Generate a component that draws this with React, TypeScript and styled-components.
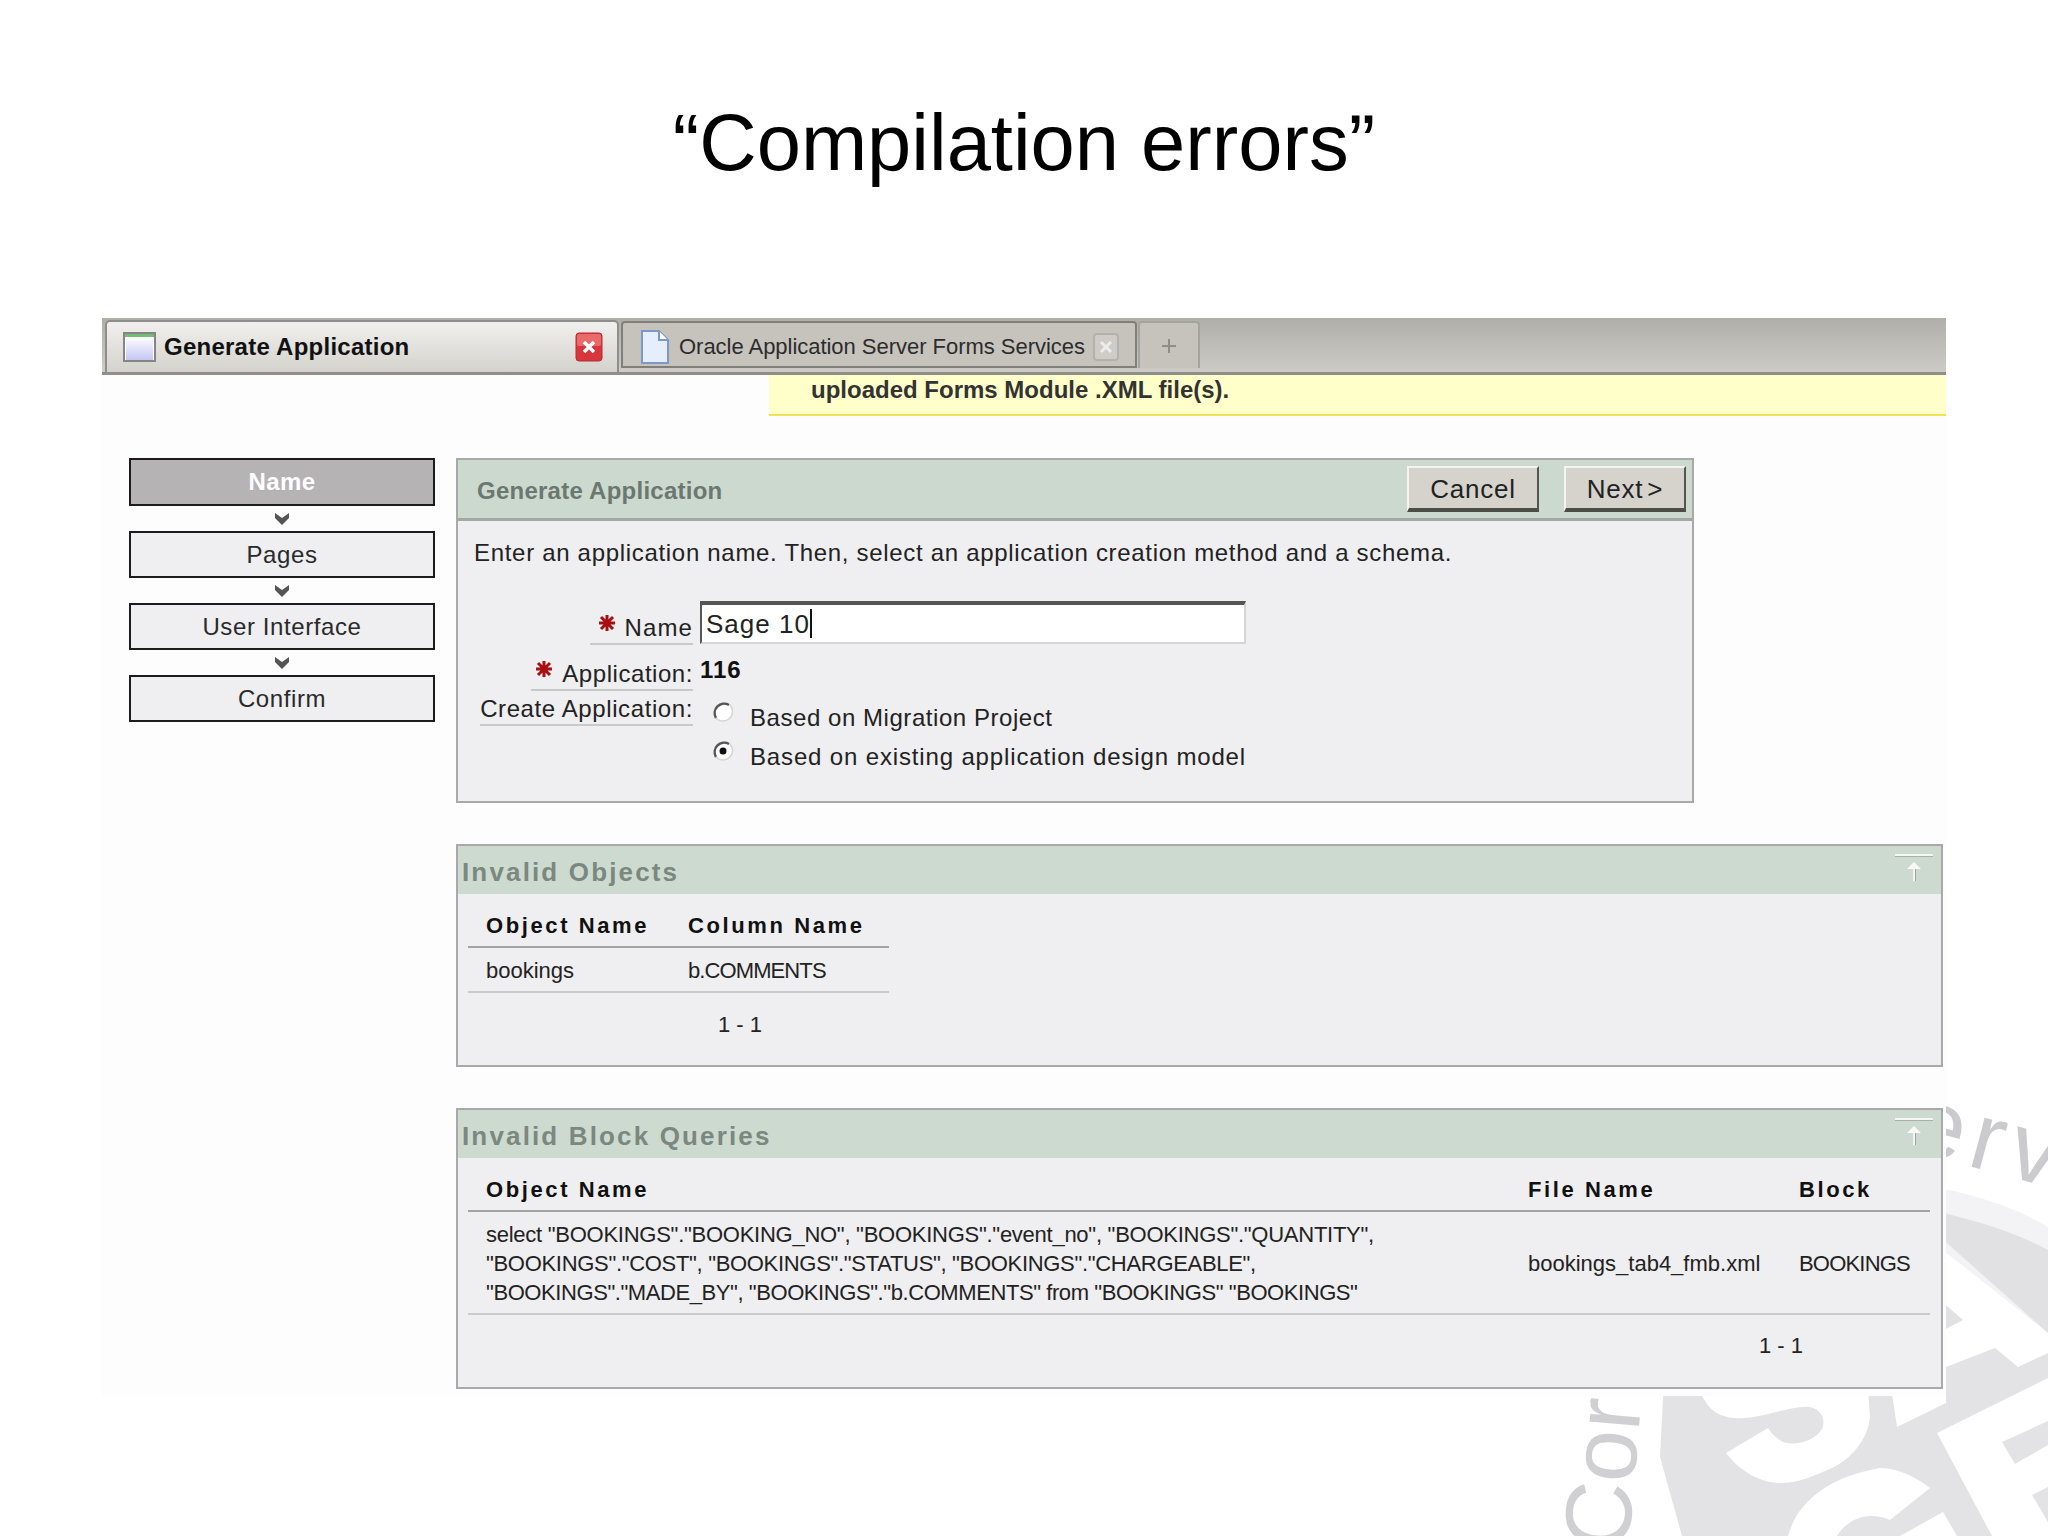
import React from 'react';
import styled, { createGlobalStyle } from 'styled-components';

const GlobalStyle = createGlobalStyle`
  html, body {
    margin: 0;
    background: #fff;
  }
  body {
    font-family: 'Liberation Sans', Arial, sans-serif;
    color: #222;
  }
`;

const Slide = styled.div`
  position: relative;
  width: 2048px;
  height: 1536px;
  overflow: hidden;
  background: #fff;
`;

const Watermark = styled.svg`
  position: absolute;
  left: 0;
  top: 0;
  width: 2048px;
  height: 1536px;
`;

const Title = styled.h1`
  position: relative;
  box-sizing: border-box;
  height: 318px;
  margin: 0;
  padding-top: 97px;
  font-size: 79.5px;
  line-height: 92px;
  font-weight: 400;
  text-align: center;
  color: #000;
`;

const Screenshot = styled.div`
  position: relative;
  width: 1844px;
  height: 1078px;
  margin-left: 102px;
  background: #fdfdfd;
`;

const TabBar = styled.div`
  box-sizing: border-box;
  display: flex;
  align-items: flex-end;
  height: 57px;
  padding-left: 3px;
  background: linear-gradient(#b0aea8, #cdcbc5);
  border-bottom: 3px solid #8e8e8b;
`;

const ActiveTab = styled.div`
  box-sizing: border-box;
  display: flex;
  align-items: center;
  width: 514px;
  height: 55px;
  margin-bottom: -3px;
  padding: 0 14px 0 16px;
  border: 2px solid #8e8e8b;
  border-bottom: 3px solid #8e8e8b;
  border-radius: 5px 5px 0 0;
  background: linear-gradient(#f1f0ee, #d3d2cc);
  font-size: 24px;
  font-weight: 700;
  letter-spacing: 0.25px;
  color: #111;
`;

const InactiveTab = styled.div<{ $plus?: boolean }>`
  box-sizing: border-box;
  display: flex;
  align-items: center;
  justify-content: ${(props) => (props.$plus ? 'center' : 'flex-start')};
  width: ${(props) => (props.$plus ? '62px' : '516px')};
  height: 47px;
  margin-left: ${(props) => (props.$plus ? '1px' : '2px')};
  margin-bottom: 4px;
  padding: ${(props) => (props.$plus ? '0' : '4px 16px 0 18px')};
  border: 2px solid ${(props) => (props.$plus ? '#a5a39e' : '#817f7a')};
  border-bottom-width: ${(props) => (props.$plus ? '0' : '2px')};
  border-radius: 4px 4px 0 0;
  background: #c6c3bd;
  font-size: 22px;
  letter-spacing: -0.03px;
  color: #2c2c2c;
`;

const TabLabel = styled.span`
  flex: 1;
  white-space: nowrap;
`;

const TabIcon = styled.svg<{ $gap: number }>`
  flex: none;
  margin-right: ${(props) => props.$gap}px;
`;

const Banner = styled.div`
  box-sizing: border-box;
  height: 41px;
  margin-left: 667px;
  padding-left: 42px;
  background: #ffffca;
  border-bottom: 2px solid #f4e254;
  font-size: 24px;
  line-height: 30px;
  font-weight: 700;
  color: #333;
`;

const Content = styled.div`
  display: flex;
  gap: 21px;
  padding: 42px 0 0 27px;
`;

const Wizard = styled.div`
  display: flex;
  flex-direction: column;
  align-items: center;
  width: 306px;
  flex: none;
`;

const Step = styled.div<{ $active?: boolean }>`
  box-sizing: border-box;
  width: 100%;
  height: ${(props) => (props.$active ? '48px' : '47px')};
  border: 2px solid #1c1c1c;
  background: ${(props) => (props.$active ? '#b5b3b4' : '#efeef0')};
  color: ${(props) => (props.$active ? '#fff' : '#2a2a2a')};
  font-size: 24px;
  font-weight: ${(props) => (props.$active ? 700 : 400)};
  letter-spacing: ${(props) => (props.$active ? '0.4px' : '0.6px')};
  line-height: 44px;
  text-align: center;
`;

const StepArrow = styled.svg`
  display: block;
  margin: 6px 0;
`;

const Main = styled.div`
  display: flex;
  flex-direction: column;
  width: 1487px;
  flex: none;
`;

const Panel = styled.section<{ $width: number; $height: number; $gap?: number }>`
  box-sizing: border-box;
  width: ${(props) => props.$width}px;
  height: ${(props) => props.$height}px;
  margin-top: ${(props) => props.$gap || 0}px;
  border: 2px solid #a9a9a9;
  background: #efeef0;
`;

const FormHeader = styled.div`
  box-sizing: border-box;
  display: flex;
  align-items: center;
  height: 61px;
  padding: 0 6px 0 19px;
  background: #ccd9cf;
  border-bottom: 3px solid #a2a8a3;
`;

const FormTitle = styled.h2`
  flex: 1;
  margin: 0;
  padding-top: 3px;
  font-size: 24px;
  font-weight: 700;
  letter-spacing: 0.25px;
  color: #6b776f;
`;

const Button = styled.div<{ $width: number }>`
  box-sizing: border-box;
  width: ${(props) => props.$width}px;
  height: 46px;
  margin-left: 25px;
  background: #d6d3cd;
  border: 2px solid #f4f3f0;
  border-right-color: #55554f;
  border-bottom: 4px solid #4d4d48;
  font-size: 26px;
  letter-spacing: 0.8px;
  word-spacing: -4px;
  line-height: 43px;
  text-align: center;
  color: #222;
`;

const Intro = styled.p`
  margin: 18px 0 0 16px;
  font-size: 24px;
  letter-spacing: 0.69px;
  line-height: 28px;
  white-space: nowrap;
`;

const Form = styled.div`
  margin: 34px 0 0 13px;
`;

const FormRow = styled.div<{ $height: number }>`
  display: flex;
  gap: 7px;
  height: ${(props) => props.$height}px;
`;

const LabelCell = styled.div<{ $top?: boolean }>`
  display: flex;
  justify-content: flex-end;
  align-items: ${(props) => (props.$top ? 'flex-start' : 'flex-end')};
  width: 222px;
  flex: none;
  padding-top: ${(props) => (props.$top ? '3px' : '0')};
`;

const FieldLabel = styled.span<{ $spacing: number; $pad?: number }>`
  box-sizing: border-box;
  display: flex;
  align-items: center;
  padding-left: ${(props) => props.$pad || 0}px;
  border-bottom: 2px solid #c9c9c9;
  font-size: 24px;
  letter-spacing: ${(props) => props.$spacing}px;
  line-height: 30px;
  white-space: nowrap;
`;

const RequiredMark = styled.svg`
  flex: none;
  margin: -10px 9px 0 0;
`;

const NameInput = styled.div`
  box-sizing: border-box;
  width: 546px;
  height: 43px;
  padding-left: 4px;
  background: #fff;
  border: 2px solid #d5d5d5;
  border-top: 4px solid #555;
  border-left-color: #555;
  font-size: 26px;
  letter-spacing: 1px;
  line-height: 39px;
`;

const Caret = styled.span`
  display: inline-block;
  width: 2px;
  height: 29px;
  background: #111;
  vertical-align: -5px;
`;

const AppNumber = styled.div`
  margin-top: 11px;
  font-size: 24px;
  font-weight: 700;
  letter-spacing: 1px;
  line-height: 28px;
  color: #111;
`;

const RadioList = styled.div`
  display: flex;
  flex-direction: column;
  gap: 11px;
  margin: 13px 0 0 11px;
`;

const RadioRow = styled.div<{ $spacing: number }>`
  display: flex;
  gap: 15px;
  font-size: 24px;
  letter-spacing: ${(props) => props.$spacing}px;
  line-height: 28px;
  white-space: nowrap;
`;

const RadioIcon = styled.svg`
  flex: none;
  margin-top: -4px;
`;

const SectionHeader = styled.div`
  display: flex;
  align-items: center;
  justify-content: space-between;
  height: 48px;
  padding: 0 7px 0 4px;
  background: #cddacf;
`;

const SectionTitle = styled.h2`
  margin: 0;
  padding-top: 5px;
  font-size: 26px;
  font-weight: 700;
  letter-spacing: 2.15px;
  color: #7b887f;
`;

const ReportTable = styled.table<{ $width: number; $rowHeight: number }>`
  width: ${(props) => props.$width}px;
  margin: 0 0 0 10px;
  border-collapse: collapse;
  table-layout: fixed;

  td {
    height: ${(props) => props.$rowHeight}px;
  }
`;

const HeadCell = styled.th<{ $width: number }>`
  box-sizing: border-box;
  width: ${(props) => props.$width}px;
  height: 53px;
  padding: 11px 0 0 18px;
  border-bottom: 2px solid #a3a3a3;
  font-size: 22px;
  font-weight: 700;
  letter-spacing: 2.6px;
  text-align: left;
  color: #111;
`;

const BodyCell = styled.td<{ $spacing?: number }>`
  padding: 2px 0 0 18px;
  border-bottom: 2px solid #cacaca;
  font-size: 22px;
  letter-spacing: ${(props) => props.$spacing || 0}px;
  line-height: 29px;
  color: #222;
  white-space: nowrap;
`;

const QueryLine = styled.div<{ $spacing: number }>`
  letter-spacing: ${(props) => props.$spacing}px;
`;

const Pagination = styled.div<{ $width: number; $top: number }>`
  width: ${(props) => props.$width}px;
  box-sizing: border-box;
  margin: ${(props) => props.$top}px 0 0 11px;
  padding-right: 128px;
  font-size: 22px;
  line-height: 32px;
  text-align: right;
`;

function BackToTop() {
  return (
    <svg width="40" height="32" viewBox="0 0 40 32">
      <rect x="1" y="0" width="38" height="2" fill="#f4f6f3" />
      <rect x="1" y="2" width="38" height="1" fill="#a9b0a9" />
      <path d="M20 8 L27 15 L13 15 Z" fill="#f8f9f7" />
      <rect x="19" y="15" width="2" height="12" fill="#f4f6f3" />
      <rect x="21" y="15" width="1" height="12" fill="#9da49d" />
    </svg>
  );
}

function StepChevron() {
  return (
    <StepArrow width="14" height="13" viewBox="0 0 14 13">
      <path d="M0 1 L7 6 L14 1 L14 6 L7 13 L0 6 Z" fill="#555" />
    </StepArrow>
  );
}

function Required() {
  return (
    <RequiredMark width="18" height="18" viewBox="0 0 18 18">
      <path d="M9 1 V17 M1 9 H17 M3 3 L15 15 M15 3 L3 15" stroke="#a80f12" strokeWidth="3" />
    </RequiredMark>
  );
}

function Radio({ checked }: { checked?: boolean }) {
  return (
    <RadioIcon width="24" height="24" viewBox="0 0 24 24">
      <circle cx="12" cy="12" r="9" fill="#fff" />
      <path d="M18 5 A9.5 9.5 0 0 0 5 18" fill="none" stroke="#555" strokeWidth="2.5" />
      <path d="M5 18 A9.5 9.5 0 0 0 19 5" fill="none" stroke="#d5d5d5" strokeWidth="1.5" />
      {checked && <circle cx="12" cy="12" r="3.5" fill="#111" />}
    </RadioIcon>
  );
}

const queryLines = [
  { text: 'select "BOOKINGS"."BOOKING_NO", "BOOKINGS"."event_no", "BOOKINGS"."QUANTITY",', spacing: -0.26 },
  { text: '"BOOKINGS"."COST", "BOOKINGS"."STATUS", "BOOKINGS"."CHARGEABLE",', spacing: -0.31 },
  { text: '"BOOKINGS"."MADE_BY", "BOOKINGS"."b.COMMENTS" from "BOOKINGS" "BOOKINGS"', spacing: -0.42 },
];

const App: React.FC = () => {
  return (
    <Slide>
      <GlobalStyle />
      <Watermark viewBox="0 0 2048 1536">
        <path
          d="M1664 1380 L1660 1457 L1682 1536 L1788 1536 C1797 1503 1827 1477 1880 1468 C1900 1468 1920 1480 1930 1488 L1890 1520 C1873 1512 1850 1515 1837 1536 L1900 1536 L1943 1512 L1957 1536 L1992 1536 L1937 1433 L2048 1378 L2048 1353 L2018 1367 L1995 1348 L1946 1367 L1946 1403 L1897 1427 L1890 1380 Z"
          fill="#e3e3e5"
        />
        <path
          d="M1700 1390 C1705 1405 1715 1417 1735 1418 C1760 1420 1790 1405 1810 1407 C1822 1410 1826 1420 1822 1429 C1815 1440 1800 1445 1787 1443 C1778 1441 1772 1434 1768 1428 L1726 1453 C1738 1468 1755 1482 1780 1483 C1800 1483 1815 1475 1830 1469 C1855 1457 1868 1437 1870 1417 L1868 1390 Z"
          fill="#fff"
        />
        <path d="M2048 1227 C2020 1210 1985 1197 1930 1186 L1930 1240 L2048 1333 Z" fill="#f3f3f5" />
        <path d="M2048 1250 C2020 1235 1985 1222 1930 1210 L1930 1228 L2048 1333 Z" fill="#e1e1e3" />
        <path d="M1940 1300 L1963 1320 L1940 1332 Z" fill="#e1e1e3" />
        <path d="M2048 1421 L2002 1442 L2015 1464 L2048 1445 Z" fill="#e3e3e5" />
        <path d="M2048 1487 L2032 1495 L2048 1522 Z" fill="#e3e3e5" />
        <text
          transform="translate(1906 1149) rotate(15)"
          fontFamily="'Liberation Sans', Arial, sans-serif"
          fontSize="96"
          letterSpacing="8"
          fill="#cbcbcd"
        >
          ervi
        </text>
        <text
          transform="translate(1628 1552) rotate(-85)"
          fontFamily="'Liberation Sans', Arial, sans-serif"
          fontSize="94"
          fill="#d0d0d2"
        >
          Cor
        </text>
      </Watermark>

      <Title>“Compilation errors”</Title>

      <Screenshot>
        <TabBar>
          <ActiveTab>
            <TabIcon $gap={8} width="33" height="30" viewBox="0 0 33 30">
              <rect x="1" y="1" width="31" height="28" fill="#fff" stroke="#858585" strokeWidth="2" />
              <rect x="2" y="2" width="29" height="3" fill="#74bd74" />
              <defs>
                <linearGradient id="windowFill" x1="0" y1="0" x2="0" y2="1">
                  <stop offset="0" stopColor="#fbfbff" />
                  <stop offset="1" stopColor="#c6c6f4" />
                </linearGradient>
              </defs>
              <rect x="3" y="6" width="27" height="22" fill="url(#windowFill)" />
            </TabIcon>
            <TabLabel>Generate Application</TabLabel>
            <svg width="28" height="30" viewBox="0 0 28 30">
              <rect x="1" y="1" width="26" height="28" rx="3" fill="#d8363c" stroke="#b92b30" />
              <rect x="2" y="2" width="24" height="12" rx="2" fill="#ea6a6c" />
              <path d="M9 10 L19 20 M19 10 L9 20" stroke="#fff" strokeWidth="3.5" />
            </svg>
          </ActiveTab>
          <InactiveTab>
            <TabIcon $gap={10} width="28" height="34" viewBox="0 0 28 34">
              <path d="M1 1 H18 L27 10 V33 H1 Z" fill="#e4eefc" stroke="#7d97cc" strokeWidth="2" />
              <path d="M18 1 V10 H27" fill="#fff" stroke="#7d97cc" strokeWidth="2" />
            </TabIcon>
            <TabLabel>Oracle Application Server Forms Services</TabLabel>
            <svg width="26" height="28" viewBox="0 0 26 28">
              <rect x="1" y="1" width="24" height="26" rx="3" fill="#cfccc7" stroke="#b3b1ac" strokeWidth="2" />
              <path d="M8 9 L18 19 M18 9 L8 19" stroke="#eeede9" strokeWidth="3" />
            </svg>
          </InactiveTab>
          <InactiveTab $plus>
            <svg width="16" height="16" viewBox="0 0 16 16">
              <path d="M8 1 V15 M1 8 H15" stroke="#8f8d87" strokeWidth="2" />
            </svg>
          </InactiveTab>
        </TabBar>

        <Banner>uploaded Forms Module .XML file(s).</Banner>

        <Content>
          <Wizard>
            <Step $active>Name</Step>
            <StepChevron />
            <Step>Pages</Step>
            <StepChevron />
            <Step>User Interface</Step>
            <StepChevron />
            <Step>Confirm</Step>
          </Wizard>

          <Main>
            <Panel $width={1238} $height={345}>
              <FormHeader>
                <FormTitle>Generate Application</FormTitle>
                <Button $width={132}>Cancel</Button>
                <Button $width={122}>Next &gt;</Button>
              </FormHeader>
              <Intro>Enter an application name. Then, select an application creation method and a schema.</Intro>
              <Form>
                <FormRow $height={44}>
                  <LabelCell>
                    <FieldLabel $spacing={1.1} $pad={8}>
                      <Required />
                      Name
                    </FieldLabel>
                  </LabelCell>
                  <NameInput>
                    Sage 10
                    <Caret />
                  </NameInput>
                </FormRow>
                <FormRow $height={46}>
                  <LabelCell>
                    <FieldLabel $spacing={0.55} $pad={4}>
                      <Required />
                      Application:
                    </FieldLabel>
                  </LabelCell>
                  <AppNumber>116</AppNumber>
                </FormRow>
                <FormRow $height={70}>
                  <LabelCell $top>
                    <FieldLabel $spacing={0.6}>Create Application:</FieldLabel>
                  </LabelCell>
                  <RadioList>
                    <RadioRow $spacing={0.55}>
                      <Radio />
                      Based on Migration Project
                    </RadioRow>
                    <RadioRow $spacing={0.85}>
                      <Radio checked />
                      Based on existing application design model
                    </RadioRow>
                  </RadioList>
                </FormRow>
              </Form>
            </Panel>

            <Panel $width={1487} $height={223} $gap={41}>
              <SectionHeader>
                <SectionTitle>Invalid Objects</SectionTitle>
                <BackToTop />
              </SectionHeader>
              <ReportTable $width={421} $rowHeight={41}>
                <thead>
                  <tr>
                    <HeadCell $width={202}>Object Name</HeadCell>
                    <HeadCell $width={219}>Column Name</HeadCell>
                  </tr>
                </thead>
                <tbody>
                  <tr>
                    <BodyCell>bookings</BodyCell>
                    <BodyCell $spacing={-0.9}>b.COMMENTS</BodyCell>
                  </tr>
                </tbody>
              </ReportTable>
              <Pagination $width={421} $top={16}>1 - 1</Pagination>
            </Panel>

            <Panel $width={1487} $height={281} $gap={41}>
              <SectionHeader>
                <SectionTitle>Invalid Block Queries</SectionTitle>
                <BackToTop />
              </SectionHeader>
              <ReportTable $width={1462} $rowHeight={99}>
                <thead>
                  <tr>
                    <HeadCell $width={1042}>Object Name</HeadCell>
                    <HeadCell $width={271}>File Name</HeadCell>
                    <HeadCell $width={149}>Block</HeadCell>
                  </tr>
                </thead>
                <tbody>
                  <tr>
                    <BodyCell>
                      {queryLines.map((line) => (
                        <QueryLine key={line.text} $spacing={line.spacing}>
                          {line.text}
                        </QueryLine>
                      ))}
                    </BodyCell>
                    <BodyCell>bookings_tab4_fmb.xml</BodyCell>
                    <BodyCell $spacing={-0.8}>BOOKINGS</BodyCell>
                  </tr>
                </tbody>
              </ReportTable>
              <Pagination $width={1462} $top={15}>1 - 1</Pagination>
            </Panel>
          </Main>
        </Content>
      </Screenshot>
    </Slide>
  );
};

export default App;
